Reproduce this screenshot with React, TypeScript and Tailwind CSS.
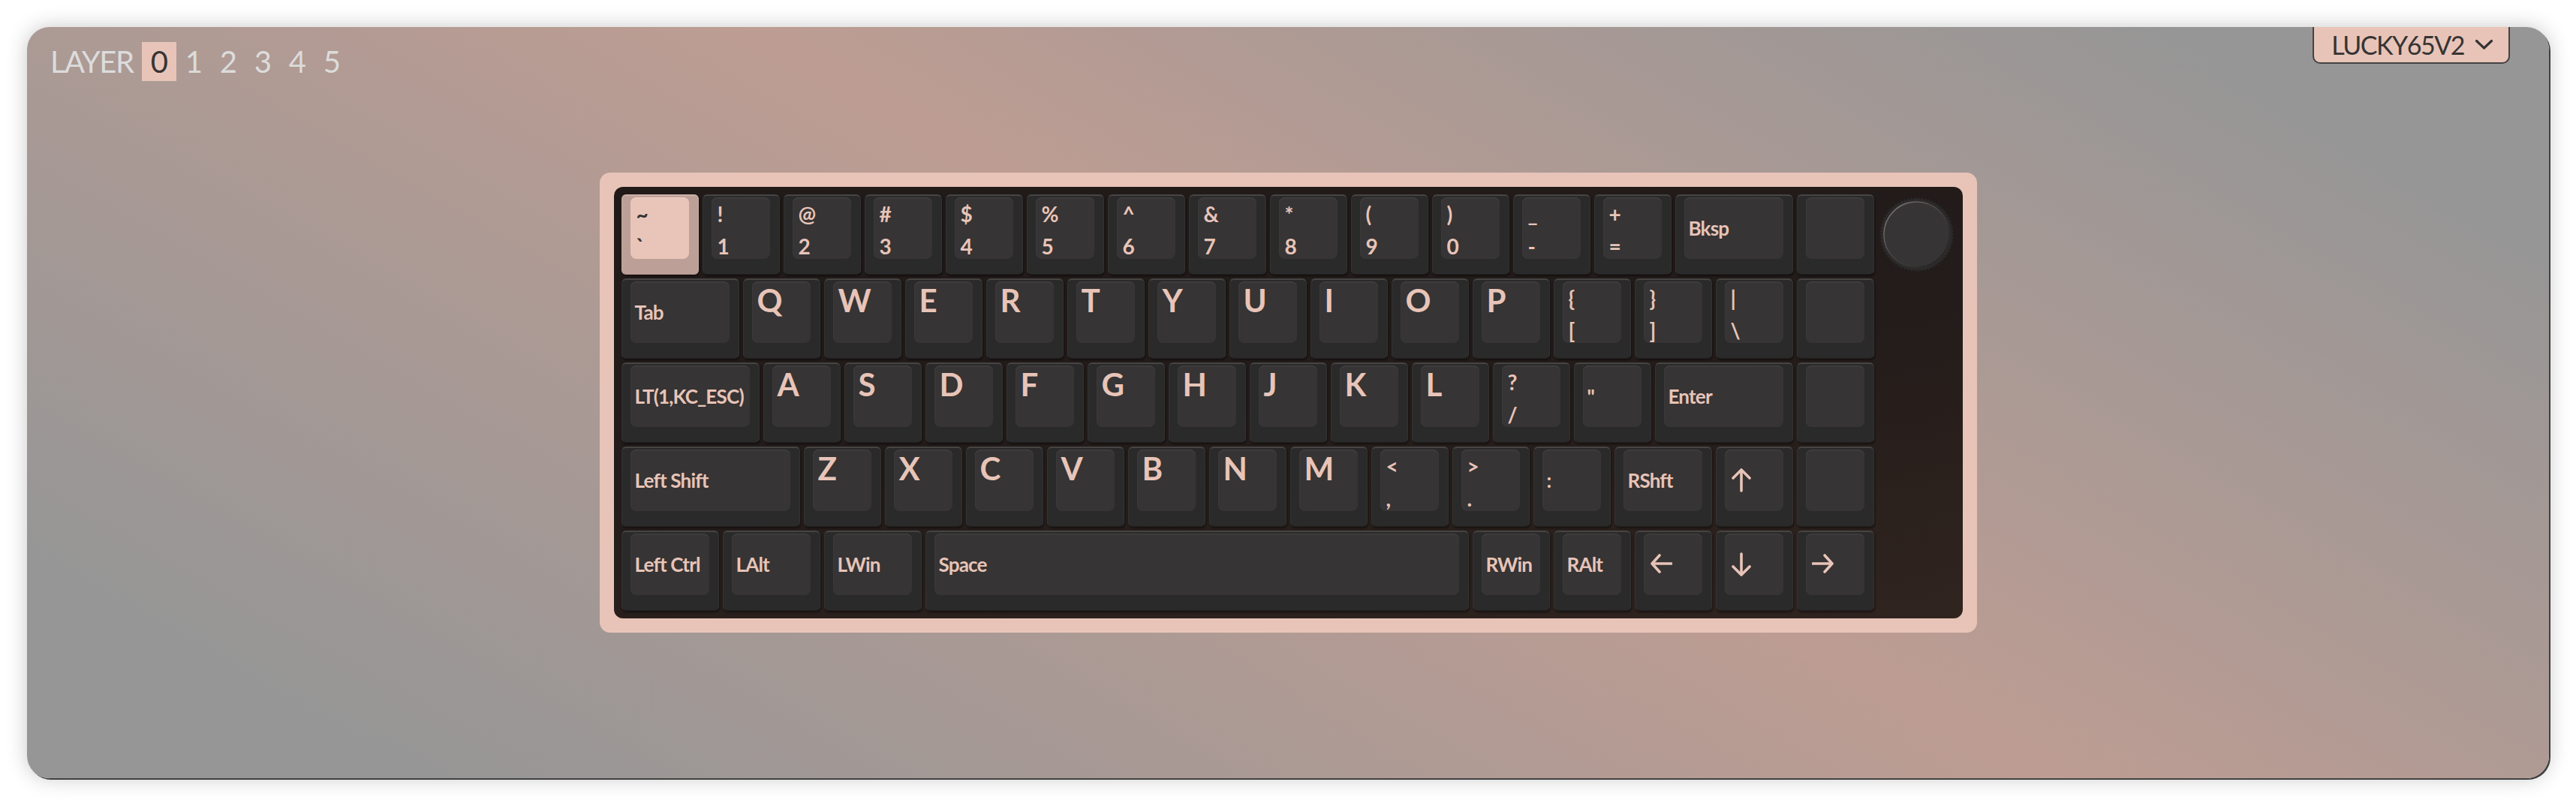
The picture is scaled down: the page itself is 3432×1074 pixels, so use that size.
import React from 'react';

type Kind = 'alpha' | 'double' | 'mod' | 'arrow' | 'blank' | 'knob';
type Dir = 'up' | 'down' | 'left' | 'right';

type KeyDef = {
  kind: Kind;
  u?: number;
  top?: string;
  bottom?: string;
  label?: string;
  accent?: boolean;
  dir?: Dir;
};

const A = (label: string): KeyDef => ({ kind: 'alpha', label });
const D = (top: string, bottom: string): KeyDef => ({ kind: 'double', top, bottom });
const M = (label: string, u = 1): KeyDef => ({ kind: 'mod', label, u });
const Ar = (dir: Dir): KeyDef => ({ kind: 'arrow', dir });
const Blank = (): KeyDef => ({ kind: 'blank' });

const rows: KeyDef[][] = [
  [
    { kind: 'double', top: '~', bottom: '`', accent: true },
    D('!', '1'),
    D('@', '2'),
    D('#', '3'),
    D('$', '4'),
    D('%', '5'),
    D('^', '6'),
    D('&', '7'),
    D('*', '8'),
    D('(', '9'),
    D(')', '0'),
    D('_', '-'),
    D('+', '='),
    M('Bksp', 1.5),
    Blank(),
    { kind: 'knob' },
  ],
  [
    M('Tab', 1.5),
    ...'QWERTYUIOP'.split('').map(A),
    D('{', '['),
    D('}', ']'),
    D('|', '\\'),
    Blank(),
  ],
  [
    M('LT(1,KC_ESC)', 1.75),
    ...'ASDFGHJKL'.split('').map(A),
    D('?', '/'),
    M('"'),
    M('Enter', 1.75),
    Blank(),
  ],
  [
    M('Left Shift', 2.25),
    ...'ZXCVBNM'.split('').map(A),
    D('<', ','),
    D('>', '.'),
    M(':'),
    M('RShft', 1.25),
    Ar('up'),
    Blank(),
  ],
  [
    M('Left Ctrl', 1.25),
    M('LAlt', 1.25),
    M('LWin', 1.25),
    M('Space', 6.75),
    M('RWin'),
    M('RAlt'),
    Ar('left'),
    Ar('down'),
    Ar('right'),
  ],
];

const arrowPaths: Record<Dir, string[]> = {
  up: ['M3 13 L14 2 L25 13', 'M14 3 V30'],
  down: ['M3 19 L14 30 L25 19', 'M14 29 V2'],
  left: ['M13 4 L3 15 L13 26', 'M4 15 H29'],
  right: ['M17 4 L27 15 L17 26', 'M26 15 H1'],
};

const ArrowGlyph = ({ dir }: { dir: Dir }) => (
  <svg width="30" height="32" viewBox="0 0 30 32" fill="none" stroke="#e8c4b8" strokeWidth="3.6" strokeLinecap="round" strokeLinejoin="round">
    {arrowPaths[dir].map((d) => (
      <path key={d} d={d} />
    ))}
  </svg>
);

const Knob = () => {
  const teeth = 66;
  const pts = Array.from({ length: teeth * 2 }, (_, i) => {
    const r = i % 2 ? 47.5 : 50.5;
    const a = (i * Math.PI) / teeth;
    return `${(52 + r * Math.cos(a)).toFixed(2)},${(53.5 + r * Math.sin(a)).toFixed(2)}`;
  }).join(' ');
  return (
    <svg width="104" height="107" viewBox="0 0 104 107">
      <defs>
        <linearGradient id="knobEdge" x1="0" y1="0" x2="1" y2="1">
          <stop offset="0%" stopColor="#8a8383" />
          <stop offset="45%" stopColor="#4a4646" />
          <stop offset="100%" stopColor="#1c1a1a" />
        </linearGradient>
      </defs>
      <polygon points={pts} fill="#2c2a2a" stroke="#242222" strokeWidth="0.8" />
      <circle cx="52" cy="53.5" r="44" fill="#363434" stroke="url(#knobEdge)" strokeWidth="1.6" />
    </svg>
  );
};

const Key = ({ k }: { k: KeyDef }) => {
  const u = k.u ?? 1;
  const width = u * 108 - 5;

  if (k.kind === 'knob') {
    return (
      <div style={{ width }} className="h-[107px] shrink-0 flex items-center justify-center">
        <Knob />
      </div>
    );
  }

  const legend = k.accent ? 'text-[#363434]' : 'text-[#e8c4b8]';

  return (
    <div
      style={{ width }}
      className={`h-[107px] shrink-0 flex flex-col rounded-[6px] border border-t-2 pl-[11px] pr-[12px] pt-[2px] pb-[20px] shadow-[1px_2px_3px_rgba(0,0,0,0.45)] ${
        k.accent
          ? 'bg-[#bca098] border-[#c4a8a0] border-t-[#cdb1a8] border-b-[#a98e86]'
          : 'bg-[#2b2a2a] border-[#343232] border-t-[#474444] border-b-[#222020]'
      }`}
    >
      <div
        className={`flex-1 rounded-[8px] overflow-hidden whitespace-nowrap ${legend} ${
          k.accent
            ? 'bg-[#e9c5b9] shadow-[inset_0_1px_0_#f0d0c5]'
            : 'bg-[#363434] shadow-[inset_0_1.5px_0_#423f3f,inset_1px_0_0_#3b3939]'
        }`}
      >
        {k.kind === 'alpha' && (
          <div className="pl-[7px] pt-[4px] text-[42px] leading-none font-bold tracking-[-0.5px]">{k.label}</div>
        )}
        {k.kind === 'double' && (
          <div className="pl-[8px] pt-[1px] text-[28px] leading-[43px] font-bold">
            <div>{k.top}</div>
            <div>{k.bottom}</div>
          </div>
        )}
        {k.kind === 'mod' && (
          <div className="h-full flex items-center pl-[6px] text-[26px] leading-none font-bold tracking-[-0.8px]">
            {k.label}
          </div>
        )}
        {k.kind === 'arrow' && k.dir && (
          <div className="h-full flex items-center pl-[8px]">
            <ArrowGlyph dir={k.dir} />
          </div>
        )}
      </div>
    </div>
  );
};

export default function App() {
  return (
    <div className="h-[1074px] w-full bg-white pt-[36px] pb-[37px] px-[36px] font-['Lato',sans-serif]">
      <div className="relative h-full rounded-[30px] bg-[linear-gradient(30deg,#969696_10%,#bd9d93_53%,#969696_90%)] shadow-[2px_2px_0_#404040,0_0_28px_rgba(0,0,0,0.22)] flex items-center justify-center">
        {/* layer picker */}
        <div className="absolute left-[31px] top-[20px] h-[52px] flex items-center text-[40px] leading-none text-[#dcdcdc]">
          <span className="mr-[12px] tracking-[-1.5px]">LAYER</span>
          {[0, 1, 2, 3, 4, 5].map((n) => (
            <span
              key={n}
              className={`w-[46px] h-[52px] flex items-center justify-center ${
                n === 0 ? 'bg-[#e8c4b8] text-[#363434]' : ''
              }`}
            >
              {n}
            </span>
          ))}
        </div>

        {/* keyboard selector */}
        <div className="absolute top-0 right-[52px] h-[49px] flex items-center gap-[14px] pl-[23px] pr-[20px] bg-[#e8c4b8] border-x-2 border-b-2 border-[#444242] rounded-b-[10px] text-[34px] leading-none tracking-[-1.5px] text-[#363434]">
          <span>LUCKY65V2</span>
          <svg width="25" height="15" viewBox="0 0 25 15" fill="none" stroke="#363434" strokeWidth="3.2" strokeLinecap="round" strokeLinejoin="round">
            <polyline points="2.5,2.5 12.5,12 22.5,2.5" />
          </svg>
        </div>

        {/* keyboard */}
        <div className="rounded-[14px] bg-[#e8c4b8] p-[19px]">
          <div className="rounded-[12px] p-[10px] bg-[linear-gradient(172deg,#201a18_0%,#231c1a_50%,#30241f_100%)] flex flex-col gap-[5px]">
            {rows.map((row, ri) => (
              <div key={ri} className="flex gap-[5px]">
                {row.map((k, ki) => (
                  <Key key={ki} k={k} />
                ))}
              </div>
            ))}
          </div>
        </div>
      </div>
    </div>
  );
}
